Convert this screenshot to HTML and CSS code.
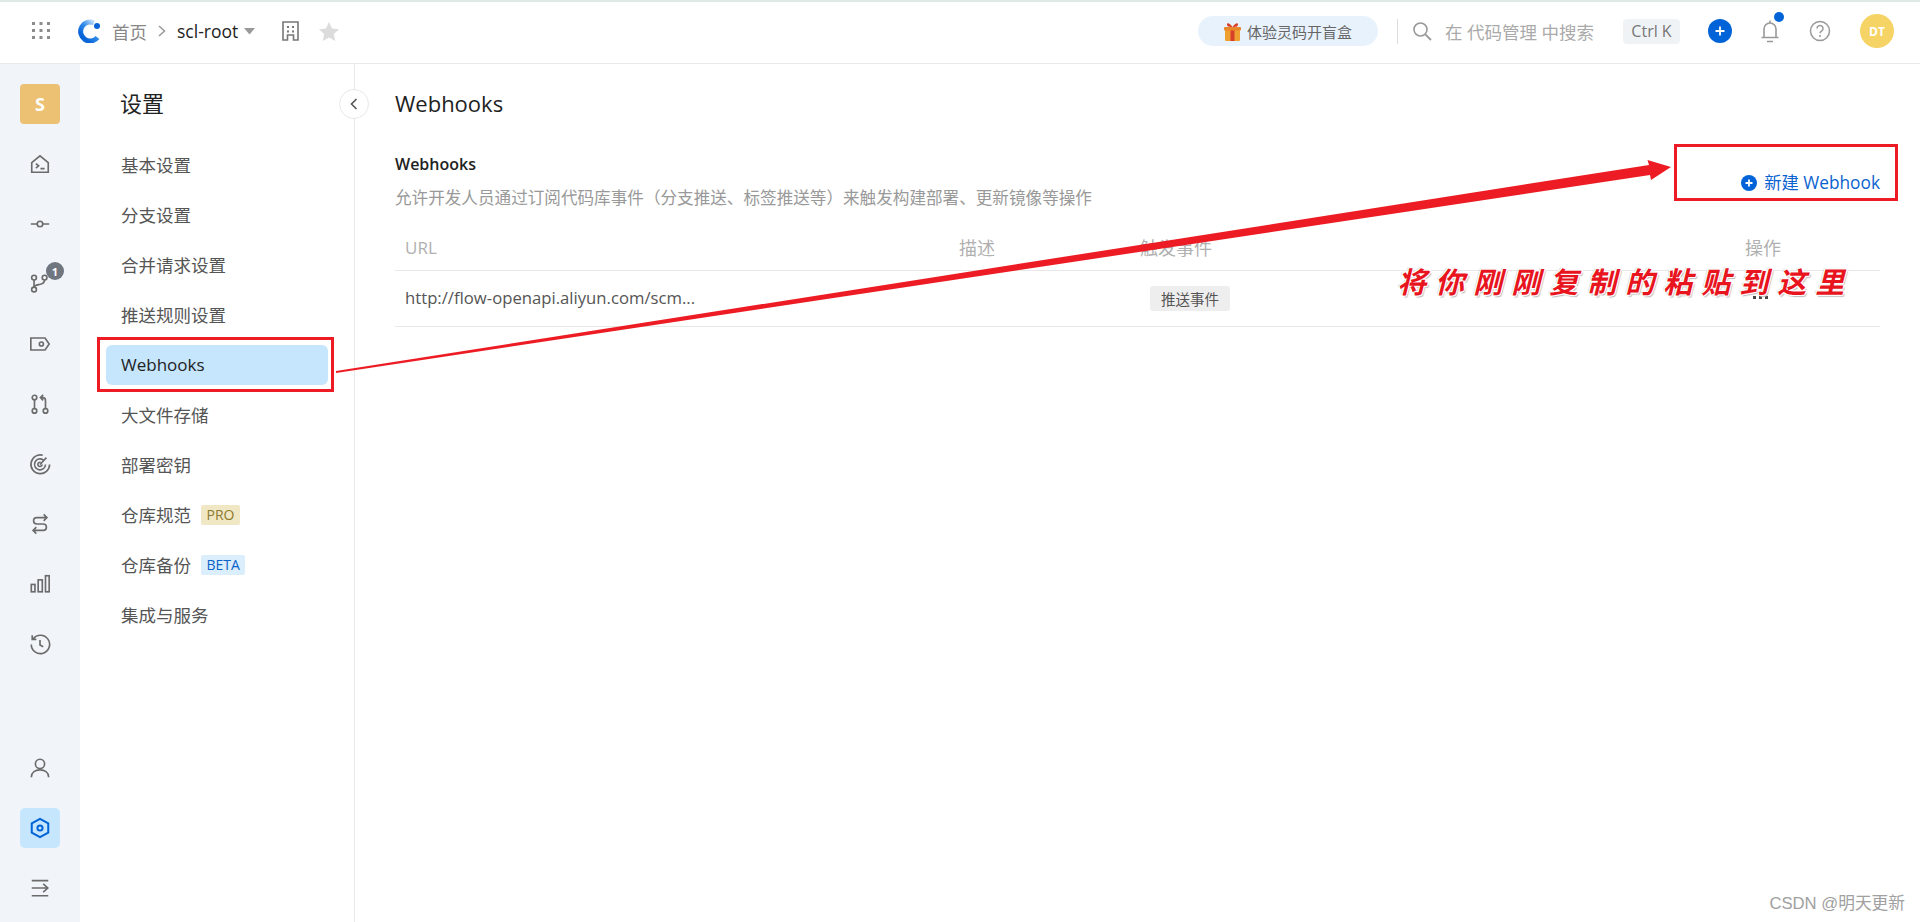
FILE: index.html
```html
<!DOCTYPE html>
<html lang="zh-CN">
<head>
<meta charset="utf-8">
<title>Webhooks · scl-root</title>
<link rel="stylesheet" href="styles.css">
</head>
<body>
<div class="app">
  <header class="topbar">
    <div class="crumbs">
      <svg class="i-apps" viewBox="0 0 18 18"><g fill="#8c8c8c"><rect x="0" y="0" width="3" height="3"/><rect x="7.5" y="0" width="3" height="3"/><rect x="15" y="0" width="3" height="3"/><rect x="0" y="7" width="3" height="3"/><rect x="7.5" y="7" width="3" height="3"/><rect x="15" y="7" width="3" height="3"/><rect x="0" y="14" width="3" height="3"/><rect x="7.5" y="14" width="3" height="3"/><rect x="15" y="14" width="3" height="3"/></g></svg>
      <svg class="i-logo" viewBox="0 0 24 24"><defs><linearGradient id="lg" x1="0.9" y1="0" x2="0.2" y2="0.8"><stop offset="0" stop-color="#d6e8fb"/><stop offset="0.55" stop-color="#2f8cea"/><stop offset="1" stop-color="#0a66d8"/></linearGradient></defs><path d="M17 3.800A9.500 9.500 0 1 0 20.500 18.500" fill="none" stroke="url(#lg)" stroke-width="5"/><circle cx="20" cy="7" r="3" fill="#0a62d6"/></svg>
      <a class="crumb-home">首页</a>
      <svg class="i-sep" viewBox="0 0 8 12"><path d="M1 1l5.500 5L1 11" fill="none" stroke="#999" stroke-width="1.500"/></svg>
      <a class="crumb-repo">scl-root</a>
      <svg class="i-caret" viewBox="0 0 11 7"><path d="M0 0h11L5.500 6.500z" fill="#999"/></svg>
      <svg class="i-org" viewBox="0 0 17 20"><path d="M1 19V1h15v18h-4.500v-5h-6v5z" fill="none" stroke="#777" stroke-width="1.600"/><g fill="#777"><rect x="5" y="5" width="2" height="2"/><rect x="10" y="5" width="2" height="2"/><rect x="5" y="9.500" width="2" height="2"/><rect x="10" y="9.500" width="2" height="2"/></g></svg>
      <svg class="i-star" viewBox="0 0 20 19"><path d="M10 0l3 6.400 7 .9-5.100 4.800 1.300 6.900L10 15.600 3.800 19l1.300-6.900L0 7.300l7-.9z" fill="#dcdcdc"/></svg>
    </div>
    <div class="tools">
      <div class="promo">
        <svg class="i-gift" viewBox="0 0 17 19"><rect x="1" y="6" width="15" height="13" rx="1" fill="#f0a030"/><rect x="6.500" y="6" width="4" height="13" fill="#d8402a"/><rect x="0" y="5" width="17" height="3.500" rx="1" fill="#e8862a"/><path d="M8.500 5C6 1 3 0 3 2.500S6 5 8.500 5c2.500 0 5.500 0 5.500-2.500S11 1 8.500 5z" fill="#d8402a"/></svg>
        <span>体验灵码开盲盒</span>
      </div>
      <span class="tool-divider"></span>
      <svg class="i-search" viewBox="0 0 19 19"><circle cx="7.500" cy="7.500" r="6.500" fill="none" stroke="#999" stroke-width="1.600"/><path d="M12.300 12.300l5.700 5.700" stroke="#999" stroke-width="1.800"/></svg>
      <span class="search-hint">在 代码管理 中搜索</span>
      <kbd class="shortcut">Ctrl K</kbd>
      <span class="add-btn"><svg viewBox="0 0 24 24"><circle cx="12" cy="12" r="12" fill="#0064d8"/><path d="M12 7.500v9M7.500 12h9" stroke="#fff" stroke-width="1.800"/></svg></span>
      <span class="bell">
        <svg viewBox="0 0 20 26"><path d="M4 19V11a6 6 0 0 1 12 0v8M1.500 19.500h17M10 2.500v2.500M7 23.500h6" fill="none" stroke="#999" stroke-width="1.600"/></svg>
        <i class="bell-dot"></i>
      </span>
      <svg class="i-help" viewBox="0 0 22 22"><circle cx="11" cy="11" r="9.500" fill="none" stroke="#999" stroke-width="1.500"/><path d="M8 8.500a3 3 0 1 1 4.500 2.600c-1 .6-1.500 1-1.500 2.200" fill="none" stroke="#999" stroke-width="1.500"/><circle cx="11" cy="16" r="1" fill="#999"/></svg>
      <span class="avatar">DT</span>
    </div>
  </header>

  <div class="body">
    <aside class="rail">
      <div class="rail-top">
        <span class="repo-badge">S</span>
        <span class="rail-item"><svg viewBox="0 0 24 24"><path d="M3 21V10.500L12 3l9 7.500V21z M7.500 11.500l3 2.500-3 2.500M12.500 17h4.500"/></svg></span>
        <span class="rail-item"><svg viewBox="0 0 24 24"><circle cx="12" cy="12" r="3"/><path d="M2 12h7M15 12h7"/></svg></span>
        <span class="rail-item has-count">
          <svg viewBox="0 0 24 24"><circle cx="5.500" cy="5" r="2.600"/><circle cx="17" cy="5" r="2.600"/><circle cx="5.500" cy="18" r="2.600"/><path d="M5.500 7.600v7.800M17 7.600c0 4-3 4.400-6 5-3 .6-5.500 1-5.500 3"/></svg>
          <b class="count">1</b>
        </span>
        <span class="rail-item"><svg viewBox="0 0 24 24"><path d="M2 5.500h15.500L22 12l-4.500 6.500H2z"/><circle cx="13.500" cy="12" r="2.200"/></svg></span>
        <span class="rail-item"><svg viewBox="0 0 24 24"><circle cx="6" cy="5" r="2.500"/><circle cx="6" cy="19.500" r="2.500"/><circle cx="18" cy="19.500" r="2.500"/><path d="M6 7.500v9.500M18 17V8c0-2-1-3-3-3h-1M15.500 2l-3 3 3 3"/></svg></span>
        <span class="rail-item"><svg viewBox="0 0 24 24"><path d="M15 2.500A10.200 10.200 0 1 0 22.500 12.500M15.500 7.500A6 6 0 1 0 18 12.500M12 12.500L19 5M14.300 12.500A2.300 2.300 0 1 1 12.500 10.200"/></svg></span>
        <span class="rail-item"><svg viewBox="0 0 24 24"><path d="M19 6H8.500a3.500 3.500 0 0 0 0 7h7a3.500 3.500 0 0 1 0 7H4M16 2.500L19.500 6 16 9.500M8 16.500L4.500 20 8 23.500" transform="translate(0 -1)"/></svg></span>
        <span class="rail-item"><svg viewBox="0 0 24 24"><rect x="2.500" y="12.500" width="4" height="8"/><rect x="10" y="7.500" width="4.500" height="13"/><rect x="18" y="3" width="4" height="17.500"/></svg></span>
        <span class="rail-item"><svg viewBox="0 0 24 24"><path d="M4.500 6.500A10 10 0 1 1 2.500 12.500M3.500 2.500v4.500H8M12 7.500V13l3.500 2"/></svg></span>
      </div>
      <div class="rail-bottom">
        <span class="rail-item"><svg viewBox="0 0 24 24"><circle cx="12" cy="7.500" r="5"/><path d="M2.500 22c0-5 4-8 9.500-8s9.500 3 9.500 8"/></svg></span>
        <span class="rail-item is-active"><svg viewBox="0 0 24 24"><path d="M12 2l9 5v10l-9 5-9-5V7z"/><circle cx="12" cy="12" r="2.800"/></svg></span>
        <span class="rail-item"><svg viewBox="0 0 24 24"><path d="M3 4h18M3 20.500h18M3 12h17M15.500 7.500L20.500 12l-5 4.500"/></svg></span>
      </div>
    </aside>

    <nav class="settings">
      <h2 class="settings-title">设置</h2>
      <button class="collapse"><svg viewBox="0 0 8 12"><path d="M6.500 1L1.500 6l5 5" fill="none" stroke="#555" stroke-width="1.600"/></svg></button>
      <ul class="settings-list">
        <li class="settings-item">基本设置</li>
        <li class="settings-item">分支设置</li>
        <li class="settings-item">合并请求设置</li>
        <li class="settings-item">推送规则设置</li>
        <li class="settings-item is-current">Webhooks</li>
        <li class="settings-item">大文件存储</li>
        <li class="settings-item">部署密钥</li>
        <li class="settings-item">仓库规范<span class="chip chip-pro">PRO</span></li>
        <li class="settings-item">仓库备份<span class="chip chip-beta">BETA</span></li>
        <li class="settings-item">集成与服务</li>
      </ul>
    </nav>

    <main class="content">
      <h1 class="page-title">Webhooks</h1>
      <section class="section-head">
        <div>
          <h3 class="section-title">Webhooks</h3>
          <p class="section-desc">允许开发人员通过订阅代码库事件（分支推送、标签推送等）来触发构建部署、更新镜像等操作</p>
        </div>
        <a class="new-hook">
          <svg viewBox="0 0 16 16"><circle cx="8" cy="8" r="8" fill="#0064d8"/><path d="M8 4.500v7M4.500 8h7" stroke="#fff" stroke-width="1.800"/></svg>
          新建 Webhook
        </a>
      </section>
      <div class="hook-table">
        <div class="hook-row hook-head">
          <span class="cell-url">URL</span><span>描述</span><span>触发事件</span><span>操作</span>
        </div>
        <div class="hook-row hook-data">
          <span class="cell-url">http://flow-openapi.aliyun.com/scm...</span>
          <span></span>
          <span><em class="event-tag">推送事件</em></span>
          <span><i class="more"><b></b><b></b><b></b></i></span>
        </div>
      </div>
    </main>
  </div>

  <!-- red callouts drawn over the page -->
  <svg class="callouts" viewBox="0 0 1920 922">
    <rect x="98.500" y="338.500" width="234" height="52" fill="none" stroke="#ed1c24" stroke-width="3"/>
    <rect x="1675.500" y="145.500" width="221" height="54" fill="none" stroke="#ed1c24" stroke-width="3"/>
    <path d="M336 371L1649 165 1647.500 160 1671 167 1651 180 1650 175 336 373z" fill="#ed1c24"/>
  </svg>
  <div class="callout-note">将你刚刚复制的粘贴到这里</div>
  <div class="watermark">CSDN @明天更新</div>
</div>
</body>
</html>
```
FILE: styles.css
```css
* { box-sizing: border-box; }
html, body { margin: 0; height: 100%; }
body {
  font-family: "Open Sans", "Noto Sans CJK SC", sans-serif;
  color: #555;
  background: #fff;
  overflow: hidden;
}
svg { display: block; flex: none; }
h1, h2, h3, p, ul { margin: 0; padding: 0; }
ul { list-style: none; }

.app { position: relative; width: 1920px; height: 922px; display: flex; flex-direction: column; }

/* top bar */
.topbar {
  height: 64px;
  flex: none;
  display: flex;
  justify-content: space-between;
  align-items: center;
  border-top: 2px solid #dfe9e6;
  border-bottom: 1px solid #e8e8e8;
  padding: 0 26px 3px 32px;
}
.crumbs, .tools { display: flex; align-items: center; }
.i-apps { width: 18px; height: 18px; }
.i-logo { width: 24px; height: 24px; margin-left: 27px; }
.crumb-home { margin-left: 11px; font-size: 17.500px; color: #888; }
.i-sep { width: 8px; height: 12px; margin-left: 11px; }
.crumb-repo { margin-left: 11px; font-size: 17.500px; font-weight: 500; color: #222; }
.i-caret { width: 11px; height: 7px; margin-left: 6px; }
.i-org { width: 17px; height: 20px; margin-left: 27px; }
.i-star { width: 20px; height: 19px; margin-left: 20px; }

.promo {
  width: 180px; height: 30px;
  border-radius: 15px;
  background: #e8f2fd;
  display: flex; align-items: center; justify-content: center; gap: 6px;
  font-size: 15px; color: #666;
}
.i-gift { width: 17px; height: 19px; }
.tool-divider { width: 1px; height: 25px; background: #ddd; margin-left: 19px; }
.i-search { width: 19px; height: 19px; margin-left: 15px; }
.search-hint { margin-left: 13px; width: 178px; font-size: 17.500px; color: #aaa; }
.shortcut {
  width: 57px; height: 25px;
  border-radius: 4px;
  background: #f0f3f6;
  font: 16px "Open Sans", sans-serif;
  color: #777;
  display: flex; align-items: center; justify-content: center;
}
.add-btn { margin-left: 28px; }
.add-btn svg { width: 24px; height: 24px; }
.bell { position: relative; margin-left: 28px; }
.bell svg { width: 20px; height: 26px; }
.bell-dot { position: absolute; left: 14px; top: -6px; width: 10px; height: 10px; border-radius: 50%; background: #0064d8; }
.i-help { width: 22px; height: 22px; margin-left: 29px; }
.avatar {
  width: 34px; height: 34px; margin-left: 29px;
  border-radius: 50%;
  background: #f6d365;
  color: #fff; font-size: 12px; font-weight: 700;
  display: flex; align-items: center; justify-content: center;
}

.body { flex: 1; min-height: 0; display: flex; }

/* icon rail */
.rail {
  width: 80px; flex: none;
  background: #f1f5f9;
  padding: 20px 20px 14px;
  display: flex; flex-direction: column; justify-content: space-between;
}
.rail-top, .rail-bottom { display: flex; flex-direction: column; gap: 20px; }
.repo-badge {
  width: 40px; height: 40px;
  border-radius: 4px;
  background: #ecc174;
  color: #fff; font-size: 18px; font-weight: 700;
  display: flex; align-items: center; justify-content: center;
}
.rail-item {
  position: relative;
  width: 40px; height: 40px;
  border-radius: 5px;
  display: flex; align-items: center; justify-content: center;
}
.rail-item svg { width: 22px; height: 22px; fill: none; stroke: #6b6b6b; stroke-width: 1.800; }
.rail-item.is-active { background: #c5e6fd; }
.rail-item.is-active svg { stroke: #0064d8; stroke-width: 2.200; }
.count {
  position: absolute; left: 26px; top: -2px;
  width: 18px; height: 18px;
  border-radius: 50%;
  background: #6f7680;
  color: #fff; font-size: 11px; font-weight: 700;
  display: flex; align-items: center; justify-content: center;
}

/* settings navigation */
.settings {
  position: relative;
  width: 275px; flex: none;
  border-right: 1px solid #e8e8e8;
  padding: 20px 0 0 26px;
}
.settings-title { height: 40px; padding-left: 14px; font-size: 22px; font-weight: 400; line-height: 38px; color: #222; }
.collapse {
  position: absolute; right: -15px; top: 25px;
  width: 30px; height: 30px; padding: 0;
  border-radius: 50%;
  border: 1px solid #e8e8e8;
  background: #fff;
  display: flex; align-items: center; justify-content: center;
}
.collapse svg { width: 8px; height: 12px; }
.settings-list { margin-top: 21px; width: 222px; display: flex; flex-direction: column; gap: 10px; }
.settings-item {
  height: 40px; padding: 0 0 2px 15px;
  border-radius: 6px;
  font-size: 17.500px;
  color: #555;
  display: flex; align-items: center;
}
.settings-item.is-current { background: #c5e6fd; color: #222; font-weight: 500; font-size: 17px; }
.chip {
  margin: 2px 0 0 10px; padding: 0 5.500px;
  height: 20px; border-radius: 2px;
  font-size: 14px; line-height: 20px;
}
.chip-pro { background: #f0e7c4; color: #8c7a2e; }
.chip-beta { background: #dbeefc; color: #0a63c8; }

/* main content */
.content { flex: 1; min-width: 0; padding: 20px 40px 0 40px; }
.page-title { height: 40px; font-size: 22px; font-weight: 500; line-height: 38px; color: #222; }
.section-head { margin-top: 28px; height: 58px; display: flex; justify-content: space-between; align-items: flex-start; }
.section-title { height: 24px; font-size: 16px; font-weight: 600; line-height: 24px; color: #222; }
.section-desc { margin-top: 10px; font-size: 16.600px; line-height: 24px; color: #999; }
.new-hook {
  margin-top: 19px;
  display: flex; align-items: center; gap: 7px;
  font-size: 17.300px; line-height: 24px; color: #0a63d0;
}
.new-hook svg { width: 16px; height: 16px; }

.hook-table { margin-top: 16px; }
.hook-row {
  display: grid;
  grid-template-columns: 554px 181px 605px 1fr;
  align-items: center;
  border-bottom: 1px solid #e8e8e8;
  padding: 0 0 2px 10px;
}
.hook-head { height: 45px; color: #b0b0b0; font-size: 18px; }
.hook-data { height: 56px; color: #555; font-size: 17px; }
.hook-head .cell-url { font-size: 17px; }
.hook-data .cell-url { font-size: 16.700px; }
.event-tag {
  display: inline-flex; align-items: center; justify-content: center;
  margin: 2px 0 0 10px;
  width: 80px; height: 25px;
  border-radius: 3px;
  background: #eee;
  font-style: normal; font-size: 14.500px; color: #555;
}
.more { display: flex; gap: 3px; margin-left: 8px; }
.more b { width: 3px; height: 3px; background: #444; }

/* annotation layer */
.callouts { position: absolute; left: 0; top: 0; width: 1920px; height: 922px; pointer-events: none; }
.callout-note {
  position: absolute; left: 1400px; top: 262px;
  font-size: 29px; font-weight: 700; line-height: 40px;
  letter-spacing: 9px; white-space: nowrap;
  color: #e8141e;
  transform: skewX(-14deg);
  text-shadow: 1px 1px 0 #fff, -1px -1px 0 #fff, 1px -1px 0 #fff, -1px 1px 0 #fff, 2px 2px 1px #bbb, -2px -1px 1px #ddd;
}
.watermark { position: absolute; right: 15px; top: 892px; font-size: 16.700px; line-height: 24px; color: #a0a0a0; font-family: "Liberation Sans", "Noto Sans CJK SC", sans-serif; }
```
